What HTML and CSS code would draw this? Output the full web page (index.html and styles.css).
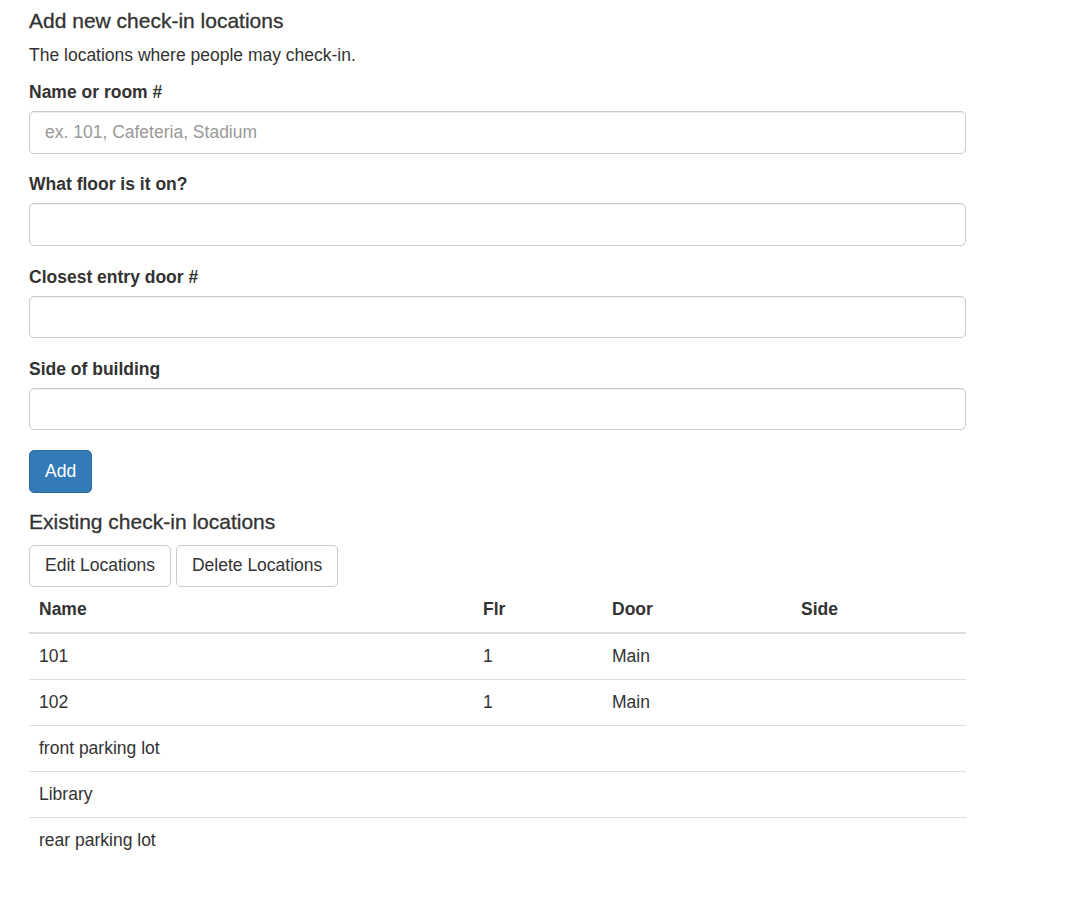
FILE: index.html
```html
<!DOCTYPE html>
<html lang="en">
<head>
<meta charset="utf-8">
<title>Check-in locations</title>
<link rel="stylesheet" href="styles.css">
</head>
<body>
<div class="container">
  <h4 class="heading">Add new check-in locations</h4>
  <p class="lead-text">The locations where people may check-in.</p>
  <form class="form">
    <div class="form-group">
      <label class="label">Name or room #</label>
      <input class="input" type="text" placeholder="ex. 101, Cafeteria, Stadium">
    </div>
    <div class="form-group">
      <label class="label">What floor is it on?</label>
      <input class="input" type="text">
    </div>
    <div class="form-group">
      <label class="label">Closest entry door #</label>
      <input class="input" type="text">
    </div>
    <div class="form-group">
      <label class="label">Side of building</label>
      <input class="input" type="text">
    </div>
    <button type="button" class="btn btn-primary btn-submit">Add</button>
  </form>
  <h4 class="heading heading-second">Existing check-in locations</h4>
  <div class="btn-row">
    <button type="button" class="btn btn-default">Edit Locations</button>
    <button type="button" class="btn btn-default">Delete Locations</button>
  </div>
  <table class="table">
    <colgroup>
      <col class="col-name">
      <col class="col-flr">
      <col class="col-door">
      <col class="col-side">
    </colgroup>
    <thead>
      <tr><th>Name</th><th>Flr</th><th>Door</th><th>Side</th></tr>
    </thead>
    <tbody>
      <tr><td>101</td><td>1</td><td>Main</td><td></td></tr>
      <tr><td>102</td><td>1</td><td>Main</td><td></td></tr>
      <tr><td>front parking lot</td><td></td><td></td><td></td></tr>
      <tr><td>Library</td><td></td><td></td><td></td></tr>
      <tr><td>rear parking lot</td><td></td><td></td><td></td></tr>
    </tbody>
  </table>
</div>
</body>
</html>
```
FILE: styles.css
```css
* { box-sizing: border-box; }
html, body { margin: 0; padding: 0; background: #fff; }
body {
  font-family: "Liberation Sans", Arial, Helvetica, sans-serif;
  font-size: 17.5px;
  line-height: 25px;
  color: #333;
}
.container {
  width: 966px;
  padding: 7.5px 0 30px 29px;
}
.heading {
  margin: 0 0 10px;
  font-size: 21px;
  font-weight: 500;
  line-height: 25px;
  color: #333;
  -webkit-text-stroke: 0.3px #333;
}
.heading-second { margin-top: 16.75px; margin-bottom: 10.25px; }
.lead-text { margin: 0 0 12.5px; }
.form { margin: 0; }
.form-group { margin-bottom: 18.75px; }
.label {
  display: block;
  font-weight: bold;
  margin-bottom: 6px;
}
.input {
  display: block;
  width: 100%;
  height: 42.5px;
  padding: 7.5px 15px;
  font-family: inherit;
  font-size: 17.5px;
  line-height: 25px;
  color: #555;
  background: #fff;
  border: 1px solid #ccc;
  border-radius: 5px;
  box-shadow: inset 0 1px 1px rgba(0,0,0,.075);
  outline: none;
}
.input::placeholder { color: #999; }
.btn {
  display: inline-block;
  height: 42.5px;
  padding: 7.75px 15px;
  font-family: inherit;
  font-size: 17.5px;
  line-height: 25px;
  border: 1px solid transparent;
  border-radius: 5px;
  cursor: pointer;
  white-space: nowrap;
}
.btn-submit { margin-top: 1px; }
.btn-primary {
  color: #fff;
  background: #337ab7;
  border-color: #2e6da4;
}
.btn-default {
  color: #333;
  background: #fff;
  border-color: #ccc;
}
.btn-row {
  display: flex;
  gap: 5px;
}
.table {
  width: 937px;
  border-collapse: collapse;
  border-spacing: 0;
  table-layout: fixed;
}
.col-name { width: 444px; }
.col-flr { width: 129px; }
.col-door { width: 189px; }
.col-side { width: 175px; }
.table th, .table td {
  padding: 10px 10px;
  text-align: left;
  line-height: 25px;
  vertical-align: top;
  border-top: 1px solid #ddd;
}
.table th {
  font-weight: bold;
  border-top: 0;
  border-bottom: 2px solid #ddd;
  vertical-align: bottom;
}
.table tbody tr:first-child td { border-top: 0; }
```
